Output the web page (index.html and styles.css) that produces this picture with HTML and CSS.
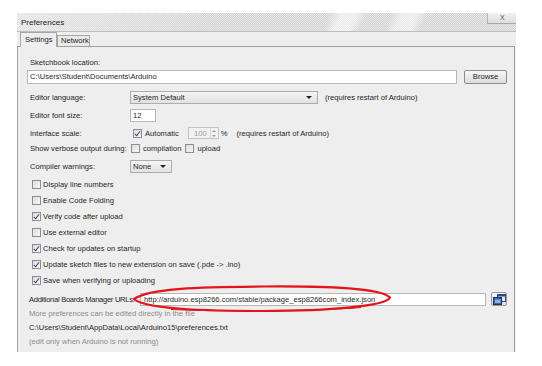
FILE: index.html
```html
<!DOCTYPE html>
<html>
<head>
<meta charset="utf-8">
<link rel="stylesheet" href="styles.css">
</head>
<body>
<div class="window">
  <div class="titlebar">
    <span class="title">Preferences</span>
    <span class="close">X</span>
  </div>
  <div class="tabs">
    <div class="tab active">Settings</div>
    <div class="tab">Network</div>
  </div>
  <div class="panel">
    <div class="row r1"><span class="lbl">Sketchbook location:</span></div>
    <div class="row r2">
      <div class="input path">C:\Users\Student\Documents\Arduino</div>
      <div class="btn">Browse</div>
    </div>
    <div class="row r3">
      <span class="lbl col">Editor language:</span>
      <div class="select lang"><span>System Default</span><span class="arrow"></span></div>
      <span class="note">(requires restart of Arduino)</span>
    </div>
    <div class="row r4">
      <span class="lbl col">Editor font size:</span>
      <div class="input size">12</div>
    </div>
    <div class="row r5">
      <span class="lbl col">Interface scale:</span>
      <span class="cb on auto"></span><span class="cbtext">Automatic</span>
      <div class="spinner"><span class="num">100</span><span class="spin"><span class="up"></span><span class="down"></span></span></div>
      <span class="pct">%</span>
      <span class="note2">(requires restart of Arduino)</span>
    </div>
    <div class="row r6">
      <span class="lbl col verbose">Show verbose output during:</span>
      <span class="cb"></span><span class="cbtext">compilation</span>
      <span class="cb second"></span><span class="cbtext">upload</span>
    </div>
    <div class="row r7">
      <span class="lbl col">Compiler warnings:</span>
      <div class="select none"><span>None</span><span class="arrow"></span></div>
    </div>
    <div class="checks">
      <div class="check"><span class="cb"></span><span class="cbtext">Display line numbers</span></div>
      <div class="check"><span class="cb"></span><span class="cbtext">Enable Code Folding</span></div>
      <div class="check"><span class="cb on"></span><span class="cbtext">Verify code after upload</span></div>
      <div class="check"><span class="cb"></span><span class="cbtext">Use external editor</span></div>
      <div class="check"><span class="cb on"></span><span class="cbtext">Check for updates on startup</span></div>
      <div class="check"><span class="cb on"></span><span class="cbtext">Update sketch files to new extension on save (.pde -&gt; .ino)</span></div>
      <div class="check"><span class="cb on"></span><span class="cbtext">Save when verifying or uploading</span></div>
    </div>
    <div class="row r8">
      <span class="lbl2">Additional Boards Manager URLs:</span>
      <div class="input url">http://arduino.esp8266.com/stable/package_esp8266com_index.json</div>
      <div class="winbtn">
        <svg width="13" height="11" viewBox="0 0 13 11">
          <rect x="4.5" y="0.5" width="8" height="7" fill="#dfe8f6" stroke="#2c4a86"/>
          <rect x="4.5" y="0.5" width="8" height="2" fill="#2c4a86"/>
          <rect x="0.5" y="3.5" width="8" height="7" fill="#3d62a6" stroke="#1e3466"/>
          <rect x="2" y="5.5" width="5.5" height="3.5" fill="#8fb0e0"/>
        </svg>
      </div>
    </div>
    <div class="info first gray">More preferences can be edited directly in the file</div>
    <div class="info">C:\Users\Student\AppData\Local\Arduino15\preferences.txt</div>
    <div class="info gray">(edit only when Arduino is not running)</div>
  </div>
  <svg class="mark" width="270" height="34" viewBox="0 0 270 34">
    <path d="M3,15 C18,4 70,3 132,2.5 C200,2 250,4 259,13.5 C255,22 200,27 132,27 C70,27 14,25 3,15 Z" fill="none" stroke="#e3151b" stroke-width="2.2"/>
    <path d="M40,25.5 C80,27.5 180,27.8 230,23.5" fill="none" stroke="#e3151b" stroke-width="1.2"/>
  </svg>
</div>
</body>
</html>
```

FILE: styles.css
```css
html, body {
  margin: 0;
  padding: 0;
  background: #ffffff;
}
body {
  font-family: "Liberation Sans", Arial, sans-serif;
  font-size: 7.6px;
  color: #1f1f1f;
  width: 542px;
  height: 366px;
  overflow: hidden;
}
.window {
  position: relative;
  margin: 13px 0 0 17px;
  width: 499px;
  height: 339px;
  background: #eeeeee;
  display: flex;
  flex-direction: column;
}
.titlebar {
  height: 18px;
  border-bottom: 1px solid #bdbdbd;
  display: flex;
  justify-content: space-between;
  align-items: center;
  background:
    linear-gradient(115deg, transparent 0 62%, rgba(255,255,255,0.55) 64% 67%, transparent 69% 74%, rgba(255,255,255,0.5) 76% 79%, transparent 81%),
    linear-gradient(90deg, rgba(255,255,255,0.35), rgba(255,255,255,0) 40%),
    repeating-conic-gradient(#d2d2d2 0 25%, #e8e8e8 0 50%) 0 0 / 2px 2px;
}
.title {
  padding-left: 4px;
  font-size: 8px;
  color: #1a1a1a;
}
.close {
  align-self: flex-start;
  width: 29px;
  height: 11px;
  box-sizing: border-box;
  border-left: 1px solid #b5b5b5;
  border-bottom: 1px solid #a9a9a9;
  background: linear-gradient(#f1f1f1, #dedede);
  color: #555;
  font-size: 7px;
  line-height: 10px;
  text-align: center;
  letter-spacing: -0.5px;
}
.tabs {
  height: 14px;
  display: flex;
  align-items: flex-end;
  padding-left: 3px;
  position: relative;
  z-index: 1;
}
.tab {
  box-sizing: border-box;
  border: 1px solid #a6a6a6;
  border-bottom: none;
  height: 11px;
  padding: 0 3px;
  line-height: 10px;
  background: #e9e9e9;
  width: 33px;
}
.tab.active {
  height: 15px;
  margin-bottom: -1px;
  width: 37px;
  padding-left: 4px;
  line-height: 13px;
  background: #eeeeee;
}
.panel {
  flex: 1;
  border: 1px solid #a0a0a0;
  border-bottom: none;
  margin-right: 1px;
  padding: 8px 7px 0 10px;
  display: flex;
  flex-direction: column;
}
.row {
  display: flex;
  align-items: center;
  white-space: nowrap;
}
.lbl { padding-left: 2px; }
.col { width: 100px; flex: none; }
.r1 { height: 14px; }
.r2 { height: 14px; margin-top: 1px; }
.r3 { height: 13px; margin-top: 7px; }
.r4 { height: 14px; margin-top: 4px; }
.r5 { height: 14px; margin-top: 4px; }
.r6 { height: 13px; margin-top: 2px; }
.r7 { height: 14px; margin-top: 4px; }
.r8 { height: 14px; margin-top: 4px; }

.input {
  box-sizing: border-box;
  height: 14px;
  background: #ffffff;
  border: 1px solid #b7b7b7;
  line-height: 12px;
  padding-left: 2px;
  white-space: nowrap;
  overflow: hidden;
}
.input.path {
  width: 430px;
  margin-left: -1px;
}
.btn {
  box-sizing: border-box;
  margin-left: 7px;
  width: 43px;
  height: 14px;
  border: 1px solid #8e8e8e;
  border-radius: 2px;
  background: linear-gradient(#f6f6f6, #dcdcdc);
  text-align: center;
  line-height: 12px;
}
.select {
  box-sizing: border-box;
  height: 13px;
  border: 1px solid #acacac;
  background: linear-gradient(#f4f4f4, #e2e2e2);
  display: flex;
  align-items: center;
  justify-content: space-between;
  padding: 0 5px 0 2px;
}
.select.lang { width: 188px; }
.select.none { width: 42px; height: 13px; }
.arrow {
  width: 0;
  height: 0;
  border-left: 3px solid transparent;
  border-right: 3px solid transparent;
  border-top: 3px solid #222;
}
.note { margin-left: 7px; }
.input.size {
  width: 26px;
  height: 13px;
}

.cb {
  box-sizing: border-box;
  flex: none;
  width: 9px;
  height: 9px;
  border: 1px solid #8e8e8e;
  background: linear-gradient(135deg, #dcdcdc, #f7f7f7);
  position: relative;
}
.cb.on::after {
  content: "";
  position: absolute;
  left: 2px;
  top: 0px;
  width: 2px;
  height: 5px;
  border-right: 1.3px solid #27407a;
  border-bottom: 1.3px solid #27407a;
  transform: rotate(38deg);
}
.cbtext { margin-left: 3px; white-space: nowrap; }
.auto { margin-left: 3px; }
.spinner {
  box-sizing: border-box;
  margin-left: 9px;
  width: 31px;
  height: 12px;
  border: 1px solid #c4c4c4;
  background: #f2f2f2;
  display: flex;
  align-items: center;
  justify-content: flex-end;
}
.num { color: #9a9a9a; margin-right: 3px; }
.spin {
  width: 7px;
  height: 10px;
  display: flex;
  flex-direction: column;
  justify-content: space-around;
  align-items: center;
  border-left: 1px solid #d4d4d4;
}
.up, .down {
  width: 0;
  height: 0;
  border-left: 2px solid transparent;
  border-right: 2px solid transparent;
}
.up { border-bottom: 2px solid #9a9a9a; }
.down { border-top: 2px solid #9a9a9a; }
.pct { margin-left: 2px; }
.note2 { margin-left: 9px; }
.verbose { width: 101px; }
.cb.second { margin-left: 4px; }

.checks {
  margin-top: 3px;
  display: flex;
  flex-direction: column;
}
.check {
  height: 16px;
  display: flex;
  align-items: center;
  padding-left: 4px;
}
.check .cbtext { margin-left: 2px; }

.lbl2 {
  padding-left: 1px;
  width: 111px;
  flex: none;
  white-space: nowrap;
  letter-spacing: -0.3px;
}
.input.url {
  width: 348px;
  height: 13px;
  padding-left: 3px;
}
.winbtn {
  box-sizing: border-box;
  margin-left: 5px;
  width: 16px;
  height: 14px;
  border: 1px solid #9a9a9a;
  border-radius: 2px;
  background: linear-gradient(#f7f7f7, #dddddd);
  display: flex;
  align-items: center;
  justify-content: center;
}
.info {
  height: 14px;
  line-height: 14px;
  padding-left: 1px;
  white-space: nowrap;
}
.info.first { margin-top: 1px; }
.gray { color: #8c8c8c; }
.mark {
  position: absolute;
  left: 114px;
  top: 271px;
}
```
